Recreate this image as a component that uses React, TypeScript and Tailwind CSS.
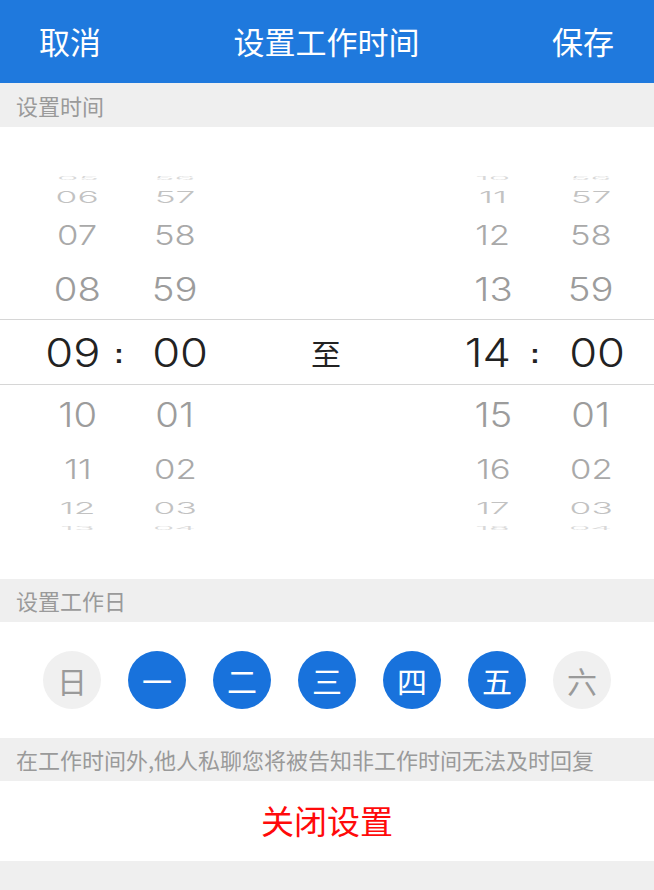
import React from "react";

type WheelRow = {
  lh: string;
  lm: string;
  rh: string;
  rm: string;
  height: string;
  text: string;
};

// rows of the two wheels, top to bottom; the selected row sits in the middle
const above: WheelRow[] = [
  { lh: "05", lm: "56", rh: "10", rm: "56", height: "h-[12px]", text: "text-[#d8d8d8] scale-x-[1.05] scale-y-[0.15]" },
  { lh: "06", lm: "57", rh: "11", rm: "57", height: "h-[26px]", text: "text-[#c2c2c2] scale-x-[1.07] scale-y-[0.5]" },
  { lh: "07", lm: "58", rh: "12", rm: "58", height: "h-[50px]", text: "text-[#a9a9a9] scale-x-[1.05] scale-y-[0.83]" },
  { lh: "08", lm: "59", rh: "13", rm: "59", height: "h-[59px]", text: "text-[#9c9c9c] scale-x-[1.16] scale-y-[1]" },
];

const below: WheelRow[] = [
  { lh: "10", lm: "01", rh: "15", rm: "01", height: "h-[61px]", text: "text-[#9c9c9c] scale-x-[1.16] scale-y-[1.04]" },
  { lh: "11", lm: "02", rh: "16", rm: "02", height: "h-[47px]", text: "text-[#a9a9a9] scale-x-[1.05] scale-y-[0.83]" },
  { lh: "12", lm: "03", rh: "17", rm: "03", height: "h-[30px]", text: "text-[#c2c2c2] scale-x-[1.07] scale-y-[0.5]" },
  { lh: "13", lm: "04", rh: "18", rm: "04", height: "h-[10px]", text: "text-[#d8d8d8] scale-x-[1.05] scale-y-[0.15]" },
];

const cols =
  "grid grid-rows-1 grid-cols-[40px_75px_8px_104px_198px_30px_76px_8px_104px_1fr] items-center";

const digits = "font-['Inter',sans-serif] font-light";

const Row = ({ row }: { row: WheelRow }) => (
  <div className={`${cols} ${row.height} ${digits} text-[33px] leading-none`}>
    <div />
    <div className="flex justify-center">
      <span className={`inline-block ${row.text}`}>{row.lh}</span>
    </div>
    <div />
    <div className="flex justify-center">
      <span className={`inline-block ${row.text}`}>{row.lm}</span>
    </div>
    <div />
    <div />
    <div className="flex justify-center">
      <span className={`inline-block ${row.text}`}>{row.rh}</span>
    </div>
    <div />
    <div className="flex justify-center">
      <span className={`inline-block ${row.text}`}>{row.rm}</span>
    </div>
    <div />
  </div>
);

const days = [
  { label: "日", on: false },
  { label: "一", on: true },
  { label: "二", on: true },
  { label: "三", on: true },
  { label: "四", on: true },
  { label: "五", on: true },
  { label: "六", on: false },
];

export default function App() {
  return (
    <div className="w-[654px] h-[890px] bg-[#efefef] font-['Noto_Sans_CJK_SC',sans-serif] overflow-hidden">
      <header className="h-[83px] bg-[#1f79dd] flex items-center justify-between pl-[39px] pr-[40px] text-white text-[31px]">
        <span>取消</span>
        <span>设置工作时间</span>
        <span>保存</span>
      </header>

      <div className="h-[44px] flex items-center px-4 text-[22px] text-[#9a9a9a]">
        设置时间
      </div>

      <div className="h-[452px] bg-white pt-[45px]">
        {above.map((r) => (
          <Row key={r.lh} row={r} />
        ))}
        <div className={`${cols} h-[66px] border-y border-[#d6d6d6] text-[#222] leading-none`}>
          <div />
          <div className={`flex justify-center pr-[10px] ${digits} text-[39px]`}>
            <span className="inline-block scale-x-[1.16]">09</span>
          </div>
          <div className="flex justify-center text-[28px] font-['Liberation_Sans',sans-serif] font-bold pt-[4px]">:</div>
          <div className={`flex justify-center pl-[11px] ${digits} text-[39px]`}>
            <span className="inline-block scale-x-[1.16]">00</span>
          </div>
          <div className="flex justify-center text-[30px]">至</div>
          <div />
          <div className={`flex justify-center pr-[11px] ${digits} text-[39px]`}>
            <span className="inline-block scale-x-[1.16]">14</span>
          </div>
          <div className="flex justify-center text-[28px] font-['Liberation_Sans',sans-serif] font-bold pt-[4px]">:</div>
          <div className={`flex justify-center pl-[12px] ${digits} text-[39px]`}>
            <span className="inline-block scale-x-[1.16]">00</span>
          </div>
          <div />
        </div>
        {below.map((r) => (
          <Row key={r.lh} row={r} />
        ))}
      </div>

      <div className="h-[43px] flex items-center px-4 text-[22px] text-[#9a9a9a]">
        设置工作日
      </div>

      <div className="h-[116px] bg-white flex items-center justify-center gap-[27px]">
        {days.map((d) => (
          <div
            key={d.label}
            className={`w-[58px] h-[58px] rounded-full flex items-center justify-center text-[30px] ${
              d.on ? "bg-[#1872dc] text-white" : "bg-[#f0f0f0] text-[#9a9a9a]"
            }`}
          >
            {d.label}
          </div>
        ))}
      </div>

      <div className="h-[43px] flex items-center px-4 text-[22px] text-[#9a9a9a] whitespace-nowrap">
        在工作时间外,他人私聊您将被告知非工作时间无法及时回复
      </div>

      <div className="h-[80px] bg-white flex items-center justify-center text-[33px] text-[#ff0a0a]">
        关闭设置
      </div>
    </div>
  );
}
